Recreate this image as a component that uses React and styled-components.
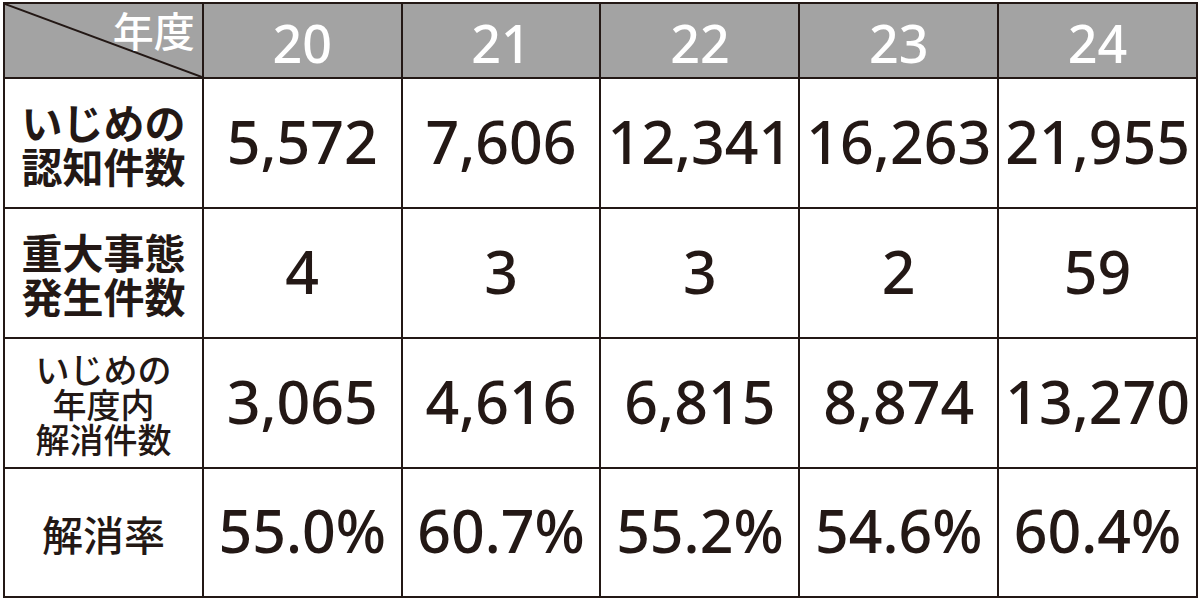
import React from "react";
import styled, { createGlobalStyle } from "styled-components";

const Global = createGlobalStyle`
  html, body { margin: 0; padding: 0; background: #ffffff; }
  body { width: 1200px; height: 601px; overflow: hidden; }
`;

const Page = styled.div`
  padding: 2px 2px 0 3px;
`;

const Table = styled.div`
  display: grid;
  grid-template-columns: repeat(6, 1fr);
  grid-template-rows: 73px 128px 128px 128px 127px;
  gap: 2px;
  padding: 2px;
  width: 1195px;
  box-sizing: border-box;
  background: #231815;
  color: #231815;
  font-family: "Noto Sans", "Noto Sans CJK JP", sans-serif;
`;

const HeadCell = styled.div`
  background: #a3a3a3;
  color: #ffffff;
  display: flex;
  align-items: center;
  justify-content: center;
  font-size: 52px;
  font-weight: 500;
  line-height: 1;
  padding-top: 4px;
  box-sizing: border-box;
`;

const CornerCell = styled.div`
  position: relative;
  background: #a3a3a3;
  display: flex;
  justify-content: flex-end;
  align-items: flex-start;
  padding: 5px 7px 0 0;
  box-sizing: border-box;
`;

const CornerLabel = styled.span`
  position: relative;
  z-index: 1;
  font-family: "Noto Sans CJK JP", sans-serif;
  font-weight: 500;
  font-size: 41px;
  line-height: 1;
  color: #ffffff;
`;

const Diagonal = styled.svg`
  position: absolute;
  inset: 0;
  width: 100%;
  height: 100%;
`;

const LabelCell = styled.div`
  background: #ffffff;
  display: flex;
  align-items: center;
  justify-content: center;
  text-align: center;
  font-family: "Noto Sans CJK JP", sans-serif;
  font-weight: ${(p) => p.$weight};
  font-size: ${(p) => p.$size}px;
  line-height: ${(p) => p.$lh}px;
`;

const ValueCell = styled.div`
  background: #ffffff;
  display: flex;
  align-items: center;
  justify-content: center;
  font-size: 59px;
  font-weight: 500;
  line-height: 1;
  padding-bottom: 4px;
  box-sizing: border-box;
`;

const years = ["20", "21", "22", "23", "24"];

const rows = [
  { label: ["いじめの", "認知件数"], size: 41, lh: 44, weight: 700, values: ["5,572", "7,606", "12,341", "16,263", "21,955"] },
  { label: ["重大事態", "発生件数"], size: 41, lh: 44, weight: 700, values: ["4", "3", "3", "2", "59"] },
  { label: ["いじめの", "年度内", "解消件数"], size: 34, lh: 35, weight: 500, values: ["3,065", "4,616", "6,815", "8,874", "13,270"] },
  { label: ["解消率"], size: 41, lh: 44, weight: 500, values: ["55.0%", "60.7%", "55.2%", "54.6%", "60.4%"] },
];

export default function App() {
  return (
    <Page>
      <Global />
      <Table>
        <CornerCell>
          <Diagonal viewBox="0 0 100 100" preserveAspectRatio="none">
            <line x1="0" y1="0" x2="100" y2="100" stroke="#231815" strokeWidth="2" vectorEffect="non-scaling-stroke" />
          </Diagonal>
          <CornerLabel>年度</CornerLabel>
        </CornerCell>
        {years.map((y) => (
          <HeadCell key={y}>{y}</HeadCell>
        ))}
        {rows.map((r, i) => (
          <React.Fragment key={i}>
            <LabelCell $size={r.size} $lh={r.lh} $weight={r.weight}>
              <div>
                {r.label.map((l, j) => (
                  <div key={j}>{l}</div>
                ))}
              </div>
            </LabelCell>
            {r.values.map((v, j) => (
              <ValueCell key={j}>{v}</ValueCell>
            ))}
          </React.Fragment>
        ))}
      </Table>
    </Page>
  );
}
